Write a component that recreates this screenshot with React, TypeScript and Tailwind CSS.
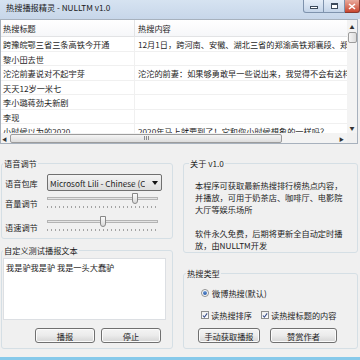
import React from "react";

const rows: [string, string][] = [
  ["跨豫皖鄂三省三条高铁今开通", "12月1日，跨河南、安徽、湖北三省的郑渝高铁郑襄段、郑阜高铁"],
  ["黎小田去世", ""],
  ["沱沱前妻说对不起宇芽", "沱沱的前妻：如果够勇敢早一些说出来，我觉得不会有这样的事"],
  ["天天12岁一米七", ""],
  ["李小璐蒋劲夫新剧", ""],
  ["李现", ""],
  ["小时候以为的2020", "2020年马上就要到了！它和你小时候想象的一样吗？"],
];

function Btn({ label, className }: { label: string; className: string }) {
  return (
    <div
      className={`flex items-center justify-center rounded-[3px] border border-[#707070] bg-linear-to-b from-[#f4f4f4] via-[#ebebeb] to-[#d5d5d5] leading-[12px] shadow-[inset_0_0_0_1px_#fbfbfb] ${className}`}
    >
      {label}
    </div>
  );
}

function Slider({ pos }: { pos: number }) {
  return (
    <div className="w-[111px]">
      <div className="relative h-[13px]">
        <div className="absolute left-0 right-0 top-[5px] h-[3px] border border-[#b3b3b3] bg-[#e4e4e4]" />
        <div
          className="absolute top-[1px] h-[11px] w-[6px] rounded-b-[3px] border border-[#888] bg-linear-to-b from-[#fbfbfb] to-[#d9d9d9]"
          style={{ left: pos }}
        />
      </div>
      <div className="mt-[1px] h-[2px] bg-[image:repeating-linear-gradient(90deg,#a3a3a3_0_1px,transparent_1px_4px)]" />
    </div>
  );
}

function Check({ label }: { label: string }) {
  return (
    <div className="flex items-center">
      <div className="flex h-[8px] w-[8px] items-center justify-center border border-[#8e8f8f] bg-linear-to-b from-[#f0f0f0] to-[#ffffff]">
        <svg width="7" height="7" viewBox="0 0 7 7">
          <path d="M1 3.5 L2.8 5.5 L6 1" fill="none" stroke="#3a4f8a" strokeWidth="1.3" />
        </svg>
      </div>
      <span className="ml-[2px] leading-[12px]">{label}</span>
    </div>
  );
}

export default function App() {
  return (
    <div className="flex h-[360px] w-[360px] flex-col overflow-hidden bg-[#f0f0f0] font-['Noto_Sans_CJK_SC',sans-serif] text-[8.2px] text-[#1e1e1e]">
      {/* title bar */}
      <div className="flex h-[19px] shrink-0 items-start justify-between bg-linear-to-b from-[#d6e3f1] to-[#c7d6e9]">
        <span className="pl-[6px] pt-[1px] leading-[12px] text-[#1a1a1a]">热搜播报精灵 - NULLTM v1.0</span>
        <div className="flex">
          <div className="flex h-[13px] w-[21px] items-center justify-center rounded-bl-[3px] border border-t-0 border-[#7f93ad] bg-linear-to-b from-[#e6eef8] to-[#c4d4e8]">
            <div className="mt-[3px] h-[3px] w-[8px] border border-[#3c4a5c] bg-white" />
          </div>
          <div className="flex h-[13px] w-[21px] items-center justify-center border-b border-r border-[#7f93ad] bg-linear-to-b from-[#e6eef8] to-[#c4d4e8]">
            <div className="h-[6px] w-[7px] border border-t-2 border-[#3c4a5c] bg-white" />
          </div>
          <div className="flex h-[13px] w-[15px] items-center justify-center rounded-br-[3px] border border-l-0 border-t-0 border-[#8a3a30] bg-linear-to-b from-[#e9a99c] to-[#c9452f]">
            <svg width="8" height="7" viewBox="0 0 8 7">
              <path d="M1 1 L7 6 M7 1 L1 6" stroke="#fff" strokeWidth="1.6" />
            </svg>
          </div>
        </div>
      </div>

      {/* list view */}
      <div className="mr-[2px] flex h-[125px] shrink-0 flex-col border border-[#a7b1bd] bg-white">
        <div className="flex min-h-0 flex-1">
          <div className="min-w-0 flex-1 overflow-hidden">
            <div className="flex h-[17px] border-b border-[#e2e3e5] bg-linear-to-b from-white to-[#f6f7f9] leading-[17px]">
              <div className="w-[134px] shrink-0 border-r border-[#e2e3e5] pl-[2px]">热搜标题</div>
              <div className="pl-[3px]">热搜内容</div>
            </div>
            {rows.map(([t, c]) => (
              <div key={t} className="flex h-[14.5px] border-b border-[#f0f0f0] leading-[14px] whitespace-nowrap">
                <div className="w-[134px] shrink-0 border-r border-[#f0f0f0] pl-[2px]">{t}</div>
                <div className="pl-[3px]">{c}</div>
              </div>
            ))}
          </div>
          {/* vertical scrollbar */}
          <div className="flex w-[10px] shrink-0 flex-col items-center bg-[#f3f3f3]">
            <div className="mt-[3px] text-[5px] leading-[7px] text-[#333]">▲</div>
            <div className="mt-[2px] h-[11px] w-[9px] rounded-[2px] border border-[#9c9c9c] bg-linear-to-r from-[#f5f5f5] to-[#dcdcdc]" />
            <div className="flex-1" />
            <div className="mb-[2px] text-[5px] leading-[7px] text-[#333]">▼</div>
          </div>
        </div>
        {/* horizontal scrollbar */}
        <div className="flex h-[10px] shrink-0">
          <div className="flex flex-1 items-center bg-[#f3f3f3]">
            <span className="ml-[1px] w-[7px] text-[5px] leading-[7px] text-[#333]">◀</span>
            <div className="ml-[1px] flex h-[9px] w-[272px] items-center justify-center rounded-[2px] border border-[#9c9c9c] bg-linear-to-b from-[#f5f5f5] to-[#dcdcdc]">
              <div className="flex gap-[1px]">
                <div className="h-[4px] w-[1px] bg-[#8a8a8a]" />
                <div className="h-[4px] w-[1px] bg-[#8a8a8a]" />
                <div className="h-[4px] w-[1px] bg-[#8a8a8a]" />
              </div>
            </div>
            <div className="flex-1" />
            <span className="mr-[3px] text-[5px] leading-[7px] text-[#333]">▶</span>
          </div>
          <div className="w-[10px] bg-[#f0f0f0]" />
        </div>
      </div>

      {/* main area */}
      <div className="flex min-h-0 flex-1">
        {/* left column */}
        <div className="ml-[1px] flex w-[172px] flex-col pt-[13px]">
          <fieldset className="h-[82px] rounded-[3px] border border-[#d5dfe5]">
            <legend className="ml-[1px] px-[1px] leading-[12px]">语音调节</legend>
            <div className="flex items-center pt-[5px]">
              <span className="w-[45px] pl-[3px] leading-[12px]">语音包库</span>
              <div className="flex h-[17px] w-[115px] items-center justify-between rounded-[2px] border border-[#707070] bg-linear-to-b from-[#f4f4f4] to-[#dcdcdc] pl-[2px] pr-[3px]">
                <span className="overflow-hidden whitespace-nowrap leading-[12px]">Microsoft Lili - Chinese (C</span>
                <svg width="6" height="4" viewBox="0 0 6 4" className="ml-[2px] shrink-0">
                  <path d="M0 0 H6 L3 4 Z" fill="#111" />
                </svg>
              </div>
            </div>
            <div className="mt-[1px] flex items-start">
              <span className="w-[45px] pl-[3px] pt-[5px] leading-[12px]">音量调节</span>
              <Slider pos={85} />
            </div>
            <div className="mt-[6px] flex items-start">
              <span className="w-[45px] pl-[3px] pt-[6px] leading-[12px]">语速调节</span>
              <Slider pos={53} />
            </div>
          </fieldset>
          <fieldset className="mt-[5px] h-[105px] rounded-[3px] border border-[#d5dfe5]">
            <legend className="ml-[1px] px-[1px] leading-[12px]">自定义测试播报文本</legend>
            <div className="ml-[1px] mt-[2px] h-[62px] w-[163px] border border-[#dcdfe3] bg-white px-[2px] pt-[2px] leading-[12px]">
              我是驴我是驴 我是一头大蠢驴
            </div>
            <div className="ml-[33px] mt-[8px] flex gap-[6px]">
              <Btn label="播报" className="h-[15px] w-[60px]" />
              <Btn label="停止" className="h-[15px] w-[60px]" />
            </div>
          </fieldset>
        </div>

        {/* right column */}
        <div className="ml-[10px] flex w-[175px] flex-col pt-[13px]">
          <fieldset className="h-[96px] rounded-[3px] border border-[#d5dfe5]">
            <legend className="ml-[5px] px-[1px] leading-[12px]">关于 v1.0</legend>
            <div className="whitespace-nowrap pl-[11px] pt-[10px] leading-[12px]">
              本程序可获取最新热搜排行榜热点内容，
              <br />
              并播放，可用于奶茶店、咖啡厅、电影院
              <br />
              大厅等娱乐场所
              <br />
              <br />
              软件永久免费，后期将更新全自动定时播
              <br />
              放，由NULLTM开发
            </div>
          </fieldset>
          <fieldset className="mt-[14px] h-[82px] rounded-[3px] border border-[#d5dfe5]">
            <legend className="ml-[2px] px-[1px] leading-[12px]">热搜类型</legend>
            <div className="ml-[17px] mt-[8px] flex items-center">
              <div className="flex h-[8px] w-[8px] items-center justify-center rounded-full border border-[#8e8f8f] bg-white">
                <div className="h-[4px] w-[4px] rounded-full bg-linear-to-b from-[#6a9ad6] to-[#2a5aa8]" />
              </div>
              <span className="ml-[3px] leading-[12px]">微博热搜(默认)</span>
            </div>
            <div className="ml-[17px] mt-[10px] flex gap-[9px]">
              <Check label="读热搜排序" />
              <Check label="读热搜标题的内容" />
            </div>
            <div className="ml-[14px] mt-[7px] flex gap-[10px]">
              <Btn label="手动获取播报" className="h-[15px] w-[62px]" />
              <Btn label="赞赏作者" className="h-[15px] w-[67px]" />
            </div>
          </fieldset>
        </div>
      </div>

      <div className="h-[3px] shrink-0 bg-[#86c9ea]" />
    </div>
  );
}
